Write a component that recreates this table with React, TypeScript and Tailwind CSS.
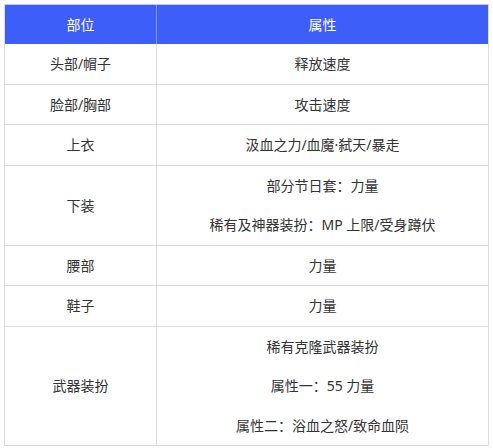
const rows: { part: string; attrs: string[] }[] = [
  { part: "头部/帽子", attrs: ["释放速度"] },
  { part: "脸部/胸部", attrs: ["攻击速度"] },
  { part: "上衣", attrs: ["汲血之力/血魔·弑天/暴走"] },
  { part: "下装", attrs: ["部分节日套：力量", "稀有及神器装扮：MP 上限/受身蹲伏"] },
  { part: "腰部", attrs: ["力量"] },
  { part: "鞋子", attrs: ["力量"] },
  { part: "武器装扮", attrs: ["稀有克隆武器装扮", "属性一：55 力量", "属性二：浴血之怒/致命血陨"] },
];

export default function App() {
  return (
    <div
      className="w-[493px] h-[448px] bg-white pt-[4px] pl-[4px] text-[14px] text-[#333]"
      style={{ fontFamily: '"Noto Sans", "Noto Sans CJK SC", sans-serif' }}
    >
      <div className="w-[485px] border border-[#dcdcdc] border-t-[#b9cbfb]">
        {/* Header */}
        <div className="grid grid-cols-[152px_1fr] h-[39px] bg-[#3d5ef8] text-white">
          <div className="flex items-center justify-center border-r border-[#7f97fa]">部位</div>
          <div className="flex items-center justify-center">属性</div>
        </div>

        {rows.map((r, i) => (
          <div
            key={r.part}
            className={
              "grid grid-cols-[152px_1fr] " +
              (i < rows.length - 1 ? "border-b border-[#dcdcdc]" : "")
            }
          >
            <div className="flex items-center justify-center border-r border-[#dcdcdc]">{r.part}</div>
            <div className="flex flex-col">
              {r.attrs.map((a) => (
                <div key={a} className="h-[39.5px] flex items-center justify-center">
                  {a}
                </div>
              ))}
            </div>
          </div>
        ))}
      </div>
    </div>
  );
}
